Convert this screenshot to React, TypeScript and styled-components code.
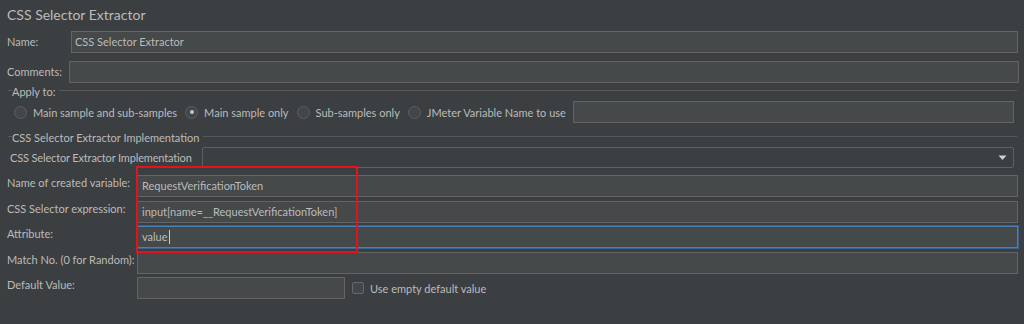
import styled, { createGlobalStyle } from "styled-components";

const GlobalStyle = createGlobalStyle`
  html, body {
    margin: 0;
    padding: 0;
    background: #3c3f41;
  }
  body {
    font-family: Lato, "Open Sans", "Liberation Sans", sans-serif;
    font-size: 11px;
    color: #bbbbbb;
  }
`;

const Panel = styled.div`
  position: relative;
  width: 1024px;
  height: 324px;
  overflow: hidden;
  display: flex;
  flex-direction: column;
  background: #3c3f41;
`;

const Title = styled.div`
  height: 31px;
  line-height: 29px;
  padding-left: 7px;
  font-size: 14px;
  color: #bbbbbb;
`;

const Row = styled.div<{ $top?: number; $left?: number; $right?: number; $height?: number }>`
  display: flex;
  align-items: flex-start;
  height: ${(p) => p.$height ?? 22}px;
  margin-top: ${(p) => p.$top ?? 0}px;
  padding-left: ${(p) => p.$left ?? 7}px;
  padding-right: ${(p) => p.$right ?? 6}px;
`;

const Label = styled.label<{ $width?: number; $raised?: boolean }>`
  flex: none;
  width: ${(p) => (p.$width ? `${p.$width}px` : "auto")};
  height: 22px;
  line-height: ${(p) => (p.$raised ? 15 : 22)}px;
  white-space: nowrap;
`;

const ComboLabel = styled.label`
  flex: none;
  width: 192px;
  height: 21px;
  line-height: 21px;
  letter-spacing: -0.15px;
  white-space: nowrap;
`;

const Input = styled.div<{ $focused?: boolean; $width?: number; $pad?: number }>`
  box-sizing: border-box;
  height: 22px;
  ${(p) => (p.$width ? `width: ${p.$width}px; flex: none;` : "flex: 1;")}
  background: #45494a;
  border: 1px solid ${(p) => (p.$focused ? "#4a7fb6" : "#646464")};
  box-shadow: ${(p) => (p.$focused ? "0 0 0 1px #3a6391" : "none")};
  padding-left: ${(p) => p.$pad ?? 4}px;
  line-height: 20px;
  white-space: nowrap;
  overflow: hidden;
  color: #bbbbbb;
`;

const Caret = styled.span`
  display: inline-block;
  width: 1px;
  height: 14px;
  margin-left: 1px;
  vertical-align: -3px;
  background: #cccccc;
`;

const Separator = styled.div<{ $top: number }>`
  display: flex;
  align-items: center;
  height: 13px;
  margin-top: ${(p) => p.$top}px;
  padding-left: 8px;
  padding-right: 7px;

  &::before {
    content: "";
    width: 4px;
    height: 1px;
    background: #55595c;
  }
  &::after {
    content: "";
    flex: 1;
    height: 1px;
    margin-left: 4px;
    background: #55595c;
  }
`;

const SeparatorText = styled.span`
  white-space: nowrap;
  line-height: 13px;
  padding-top: 2px;
`;

const RadioGroup = styled.div`
  display: flex;
  align-items: center;
  height: 22px;
  gap: 8px;
  flex: none;
`;

const RadioItem = styled.label`
  display: flex;
  align-items: center;
  gap: 6px;
  white-space: nowrap;
`;

const RadioCircle = styled.span<{ $checked?: boolean }>`
  box-sizing: border-box;
  width: 13px;
  height: 13px;
  border-radius: 50%;
  border: 1px solid #5b5f62;
  background: #43474a;
  display: flex;
  align-items: center;
  justify-content: center;

  &::after {
    content: "";
    display: ${(p) => (p.$checked ? "block" : "none")};
    width: 4px;
    height: 4px;
    border-radius: 50%;
    background: #c4c4c4;
  }
`;

const Combo = styled.div`
  box-sizing: border-box;
  flex: 1;
  height: 21px;
  background: #3c3f41;
  border: 1px solid #5e6163;
  border-radius: 2px;
  display: flex;
  align-items: center;
  justify-content: flex-end;
  padding-right: 6px;
`;

const FieldsBlock = styled.div`
  display: flex;
  flex-direction: column;
  gap: 3.5px;
  margin-top: 7px;
`;

const CheckItem = styled.label`
  display: flex;
  align-items: center;
  gap: 6px;
  height: 22px;
  margin-left: 7px;
  white-space: nowrap;
`;

const CheckBox = styled.span`
  box-sizing: border-box;
  width: 12px;
  height: 12px;
  border: 1px solid #66696b;
  border-radius: 2px;
  background: #43474a;
`;

const Highlight = styled.div`
  position: absolute;
  left: 136px;
  top: 166px;
  width: 222px;
  height: 87px;
  box-sizing: border-box;
  border: 2px solid #e3131d;
  pointer-events: none;
`;

const radios = [
  { label: "Main sample and sub-samples", checked: false },
  { label: "Main sample only", checked: true },
  { label: "Sub-samples only", checked: false },
  { label: "JMeter Variable Name to use", checked: false },
];

const fields = [
  { label: "Name of created variable:", value: "RequestVerificationToken" },
  { label: "CSS Selector expression:", value: "input[name=__RequestVerificationToken]" },
  { label: "Attribute:", value: "value", focused: true },
  { label: "Match No. (0 for Random):", value: "" },
];

export default function App() {
  return (
    <>
      <GlobalStyle />
      <Panel>
        <Title>CSS Selector Extractor</Title>

        <Row>
          <Label $width={64}>Name:</Label>
          <Input $pad={3}>CSS Selector Extractor</Input>
        </Row>
        <Row $top={8} $right={5}>
          <Label $width={62}>Comments:</Label>
          <Input />
        </Row>

        <Separator $top={1}>
          <SeparatorText>Apply to:</SeparatorText>
        </Separator>
        <Row $top={4} $left={14} $right={10}>
          <RadioGroup>
            {radios.map((r) => (
              <RadioItem key={r.label}>
                <RadioCircle $checked={r.checked} />
                {r.label}
              </RadioItem>
            ))}
          </RadioGroup>
          <Input style={{ marginLeft: 7 }} />
        </Row>

        <Separator $top={7}>
          <SeparatorText>CSS Selector Extractor Implementation</SeparatorText>
        </Separator>
        <Row $top={4} $left={10} $right={10} $height={21}>
          <ComboLabel>CSS Selector Extractor Implementation</ComboLabel>
          <Combo>
            <svg width="9" height="6" viewBox="0 0 9 6">
              <polygon points="0.5,0.5 8.5,0.5 4.5,5" fill="#d0d0d0" />
            </svg>
          </Combo>
        </Row>

        <FieldsBlock>
          {fields.map((f) => (
            <Row key={f.label}>
              <Label $width={130} $raised>
                {f.label}
              </Label>
              <Input $focused={f.focused}>
                {f.value}
                {f.focused && <Caret />}
              </Input>
            </Row>
          ))}
          <Row>
            <Label $width={130} $raised>
              Default Value:
            </Label>
            <Input $width={208} />
            <CheckItem>
              <CheckBox />
              Use empty default value
            </CheckItem>
          </Row>
        </FieldsBlock>

        <Highlight />
      </Panel>
    </>
  );
}
